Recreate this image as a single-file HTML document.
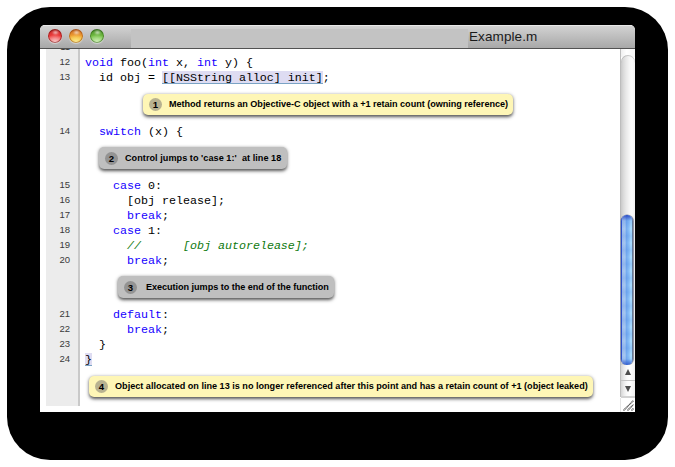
<!DOCTYPE html>
<html><head><meta charset="utf-8">
<style>
html,body{margin:0;padding:0;}
body{width:675px;height:467px;overflow:hidden;background:#fff;position:relative;font-family:"Liberation Sans",sans-serif;}
#shadow{position:absolute;left:7px;top:7px;width:661px;height:453px;background:#000;border-radius:43px;}
#win{position:absolute;left:40px;top:25px;width:595px;height:387px;background:#fff;overflow:hidden;border-radius:5px 5px 0 0;}
#title{position:absolute;left:0;top:0;width:595px;height:24px;
 background:linear-gradient(#e8e8e8 0px,#e8e8e8 1px,#d2d2d2 1px,#a8a8a8 23px,#525252 23px,#525252 24px);}
.tl{position:absolute;top:4px;width:14px;height:14px;border-radius:50%;box-sizing:border-box;}
.tl::after{content:"";position:absolute;left:4.5px;top:1.5px;width:5px;height:3px;border-radius:50%;background:rgba(255,255,255,.75);filter:blur(.8px);}
.red{background:radial-gradient(ellipse 70% 55% at 50% 95%,#fbd0d0 0,#f59a9a 45%,rgba(240,70,70,0) 100%),linear-gradient(#9a1c1c 0,#d83030 25%,#ee3a3a 50%,#ef5050 75%,#f4a0a0 100%);box-shadow:inset 0 0 0 1px rgba(120,15,15,.6),0 1px 1px rgba(255,255,255,.45);}
.orange{background:radial-gradient(ellipse 70% 55% at 50% 95%,#fdf0a0 0,#f8d868 45%,rgba(245,180,60,0) 100%),linear-gradient(#a8501a 0,#dc8028 25%,#f0a030 50%,#f4b840 75%,#f8d870 100%);box-shadow:inset 0 0 0 1px rgba(150,70,10,.55),0 1px 1px rgba(255,255,255,.45);}
.green{background:radial-gradient(ellipse 70% 55% at 50% 95%,#d8f4c0 0,#b0e090 45%,rgba(120,200,80,0) 100%),linear-gradient(#3a7420 0,#5aa232 25%,#70bc40 50%,#80c858 75%,#b8e498 100%);box-shadow:inset 0 0 0 1px rgba(40,90,20,.55),0 1px 1px rgba(255,255,255,.45);}
#tab{position:absolute;left:91px;top:4px;width:337px;height:19px;background:#c3c3c3;}
#ttl{position:absolute;left:429px;top:3.5px;font-size:13.5px;letter-spacing:0.1px;color:#1a1a1a;line-height:16px;white-space:pre;}
#content{position:absolute;left:0;top:24px;width:595px;height:363px;background:#fff;overflow:hidden;}
#gutter{position:absolute;left:6px;top:0;width:32px;height:357px;background:#ececec;border-right:2px solid #c9c9c9;}
#lines{position:absolute;left:0;top:-10px;width:580px;}
.ln{position:relative;height:15px;}
.num{position:absolute;right:550px;top:0;font-size:9.5px;line-height:15px;color:#3a3a3a;}
.code{position:absolute;left:45px;top:2px;font-family:"Liberation Mono",monospace;font-size:11.67px;line-height:15px;white-space:pre;color:#000;}
.k{color:#1400ff;}
.c{color:#0f7a0f;font-style:italic;}
.hl{position:absolute;top:2px;height:12px;background:#dedcf2;border-bottom:1px solid #7aa3c4;}
.ann{position:relative;height:39px;}
.bub{position:absolute;top:10px;height:21px;border-radius:5px;box-shadow:0 1.5px 3.5px rgba(0,0,0,.68);font-weight:bold;font-size:9.1px;line-height:20px;white-space:pre;color:#000;}
.y{background:#fef6b6;}
.g{background:#bfbfbf;height:21.5px;}
.g .dot{top:5px;}
.g .bt{top:1px;}
.dot{position:absolute;top:4px;width:13px;height:13px;border-radius:50%;text-align:center;line-height:13px;font-size:9.6px;}
.y .dot{background:#b8b290;}
.g .dot{background:#939393;}
.bt{position:absolute;top:0;margin-left:-1px;}
#sb{position:absolute;left:580px;top:0;width:15px;height:363px;background:#fff;}
#sbl{position:absolute;left:0;top:0;width:1px;height:348px;background:#bdbdbd;}
#track{position:absolute;left:1px;top:6px;width:14px;height:310px;border-radius:7px 7px 0 0;background:linear-gradient(90deg,#c9c9c9 0,#d8d8d8 2px,#e8e8e8 5px,#f8f8f8 9px,#fbfbfb 11px,#f2f2f2 14px);box-shadow:inset 0 1px 0 rgba(120,120,120,.35);}
#cap{position:absolute;left:1px;top:0;width:14px;height:8px;background:linear-gradient(90deg,#f0f0f0,#fff 40%,#f6f6f6);}
#thumb{position:absolute;left:1px;top:166px;width:12px;height:150px;border-radius:6px;background:repeating-linear-gradient(rgba(40,100,220,0) 0,rgba(40,100,220,.16) 7px,rgba(40,100,220,0) 14px),linear-gradient(90deg,#2a48c8 0,#3358d0 1px,#a2c2ee 1.5px,#a8c8f0 4px,#78aef0 5.5px,#8cc2f8 8px,#b0e2ff 10px,#9ed6ff 11px,#6a7a90 11.5px,#6a7a90 12px);box-shadow:0 0 0 .5px rgba(40,60,120,.5),1px 0 1px rgba(0,0,0,.3);}
#thumb::before{content:"";position:absolute;left:0;right:0;top:0;height:6px;border-radius:6px 6px 0 0;background:linear-gradient(rgba(30,60,190,.9),rgba(60,110,220,0));}
#thumb::after{content:"";position:absolute;left:0;right:0;bottom:0;height:6px;border-radius:0 0 6px 6px;background:linear-gradient(rgba(40,90,210,0),rgba(40,80,200,.85));}
.sbtn{position:absolute;left:1px;width:14px;background:linear-gradient(90deg,#d6d6d6 0,#ececec 3px,#fafafa 6px,#ffffff 9px,#efefef 14px);}
#up{top:316px;height:15px;}
#dn{top:332px;height:15px;}
#div1{position:absolute;left:1px;top:331px;width:14px;height:1px;background:#c4c4c4;}
#div2{position:absolute;left:1px;top:347px;width:14px;height:2px;background:#d2d2d2;}
.tri{position:absolute;left:3.5px;width:0;height:0;border-left:3.75px solid transparent;border-right:3.75px solid transparent;}
#up .tri{top:4px;border-bottom:6px solid #4e4e4e;}
#dn .tri{top:5px;border-top:6px solid #4e4e4e;}
#grip{position:absolute;left:0;top:349px;width:15px;height:14px;}
#sbl2{position:absolute;left:0;top:349px;width:1px;height:14px;background:#e4e4e4;}
</style></head><body>
<div id="shadow"></div>
<div id="win">
 <div id="title">
  <div class="tl red" style="left:8px;"></div>
  <div class="tl orange" style="left:29px;"></div>
  <div class="tl green" style="left:50px;"></div>
  <div id="tab"></div>
  <div id="ttl">Example.m</div>
 </div>
 <div id="content">
  <div id="gutter"></div>
  <div id="lines">
   <div class="ln"><span class="num">11</span><span class="code"></span></div>
   <div class="ln"><span class="num">12</span><span class="code"><span class="k">void</span> foo(<span class="k">int</span> x, <span class="k">int</span> y) {</span></div>
   <div class="ln"><div class="hl" style="left:122px;width:161px;"></div><span class="num">13</span><span class="code">  id obj = [[NSString alloc] init];</span></div>
   <div class="ann"><div class="bub y" style="left:103px;width:370px;"><span class="dot" style="left:6px;">1</span><span class="bt" style="left:27px;letter-spacing:-0.03px;">Method returns an Objective-C object with a +1 retain count (owning reference)</span></div></div>
   <div class="ln"><span class="num">14</span><span class="code">  <span class="k">switch</span> (x) {</span></div>
   <div class="ann"><div class="bub g" style="top:9px;left:59px;width:188px;"><span class="dot" style="left:6px;">2</span><span class="bt" style="left:27px;letter-spacing:0.05px;">Control jumps to 'case 1:'  at line 18</span></div></div>
   <div class="ln"><span class="num">15</span><span class="code">    <span class="k">case</span> 0:</span></div>
   <div class="ln"><span class="num">16</span><span class="code">      [obj release];</span></div>
   <div class="ln"><span class="num">17</span><span class="code">      <span class="k">break</span>;</span></div>
   <div class="ln"><span class="num">18</span><span class="code">    <span class="k">case</span> 1:</span></div>
   <div class="ln"><span class="num">19</span><span class="code">      <span class="c">//      [obj autorelease];</span></span></div>
   <div class="ln"><span class="num">20</span><span class="code">      <span class="k">break</span>;</span></div>
   <div class="ann"><div class="bub g" style="top:9px;left:78px;width:216px;"><span class="dot" style="left:6px;">3</span><span class="bt" style="left:29px;letter-spacing:-0.04px;">Execution jumps to the end of the function</span></div></div>
   <div class="ln"><span class="num">21</span><span class="code">    <span class="k">default</span>:</span></div>
   <div class="ln"><span class="num">22</span><span class="code">      <span class="k">break</span>;</span></div>
   <div class="ln"><span class="num">23</span><span class="code">  }</span></div>
   <div class="ln"><div class="hl" style="left:45px;width:7px;"></div><span class="num">24</span><span class="code">}</span></div>
   <div class="ann"><div class="bub y" style="left:49px;width:504px;"><span class="dot" style="left:6px;">4</span><span class="bt" style="left:27px;">Object allocated on line 13 is no longer referenced after this point and has a retain count of +1 (object leaked)</span></div></div>
  </div>
  <div id="sb"><div id="cap"></div><div id="track"></div><div id="sbl"></div><div id="thumb"></div>
   <div id="up" class="sbtn"><div class="tri"></div></div><div id="div1"></div>
   <div id="dn" class="sbtn"><div class="tri"></div></div><div id="div2"></div><div id="sbl2"></div>
   <svg id="grip" width="15" height="14" viewBox="0 0 15 14"><g stroke="#555" stroke-width="1.5" stroke-dasharray="1.1 .5"><line x1="3.5" y1="12.5" x2="13.5" y2="2.5"/><line x1="7.5" y1="12.5" x2="13.5" y2="6.5"/><line x1="11.5" y1="12.5" x2="13.5" y2="10.5"/></g></svg>
  </div>
 </div>
</div>
</body></html>
